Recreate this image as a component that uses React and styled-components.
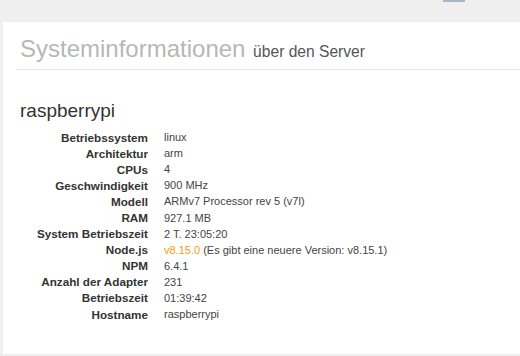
import React from "react";
import styled, { createGlobalStyle } from "styled-components";

const Global = createGlobalStyle`
  html, body { margin: 0; padding: 0; background: #efefef; }
  body { font-family: "Liberation Sans", Arial, sans-serif; }
`;

const Page = styled.div`
  width: 520px;
  height: 356px;
  display: flex;
  flex-direction: column;
  overflow: hidden;
`;

const TopBar = styled.div`
  height: 22px;
  flex: none;
  display: flex;
  justify-content: flex-end;
  align-items: flex-start;
  padding-right: 55px;
`;

const TopTab = styled.div`
  width: 22px;
  height: 2px;
  background: #aab6c8;
`;

const Panel = styled.div`
  flex: 1;
  margin: 0 0 2px 3px;
  background: #fff;
  display: flex;
  flex-direction: column;
`;

const Header = styled.div`
  margin-left: 13px;
  height: 48px;
  box-sizing: border-box;
  padding: 14px 0 0 4px;
  border-bottom: 1px solid #e6e6e6;
`;

const Title = styled.h1`
  margin: 0;
  font-size: 24px;
  line-height: 26px;
  font-weight: normal;
  color: #b7b7b7;
  white-space: nowrap;
`;

const Sub = styled.small`
  font-size: 15.6px;
  color: #555;
  padding-left: 1px;
`;

const Body = styled.div`
  padding: 30px 0 0 17px;
`;

const HostName = styled.h3`
  margin: 0 0 8px;
  font-size: 19px;
  line-height: 21px;
  font-weight: normal;
  color: #333;
`;

const InfoGrid = styled.div`
  display: grid;
  grid-template-columns: 128px auto;
  grid-auto-rows: 16.1px;
  column-gap: 16px;
  align-items: center;
`;

const Label = styled.div`
  text-align: right;
  font-weight: bold;
  font-size: 11.7px;
  color: #333;
  white-space: nowrap;
`;

const Value = styled.div`
  font-size: 11px;
  color: #444;
  white-space: nowrap;
`;

const Warn = styled.span`
  color: #f39c12;
`;

const rows = [
  ["Betriebssystem", "linux"],
  ["Architektur", "arm"],
  ["CPUs", "4"],
  ["Geschwindigkeit", "900 MHz"],
  ["Modell", "ARMv7 Processor rev 5 (v7l)"],
  ["RAM", "927.1 MB"],
  ["System Betriebszeit", "2 T. 23:05:20"],
  ["Node.js", null],
  ["NPM", "6.4.1"],
  ["Anzahl der Adapter", "231"],
  ["Betriebszeit", "01:39:42"],
  ["Hostname", "raspberrypi"],
];

export default function App() {
  return (
    <Page>
      <Global />
      <TopBar>
        <TopTab />
      </TopBar>
      <Panel>
        <Header>
          <Title>
            Systeminformationen <Sub>über den Server</Sub>
          </Title>
        </Header>
        <Body>
          <HostName>raspberrypi</HostName>
          <InfoGrid>
            {rows.map(([k, v]) => (
              <React.Fragment key={k}>
                <Label>{k}</Label>
                <Value>
                  {v === null ? (
                    <>
                      <Warn>v8.15.0</Warn> (Es gibt eine neuere Version: v8.15.1)
                    </>
                  ) : (
                    v
                  )}
                </Value>
              </React.Fragment>
            ))}
          </InfoGrid>
        </Body>
      </Panel>
    </Page>
  );
}
